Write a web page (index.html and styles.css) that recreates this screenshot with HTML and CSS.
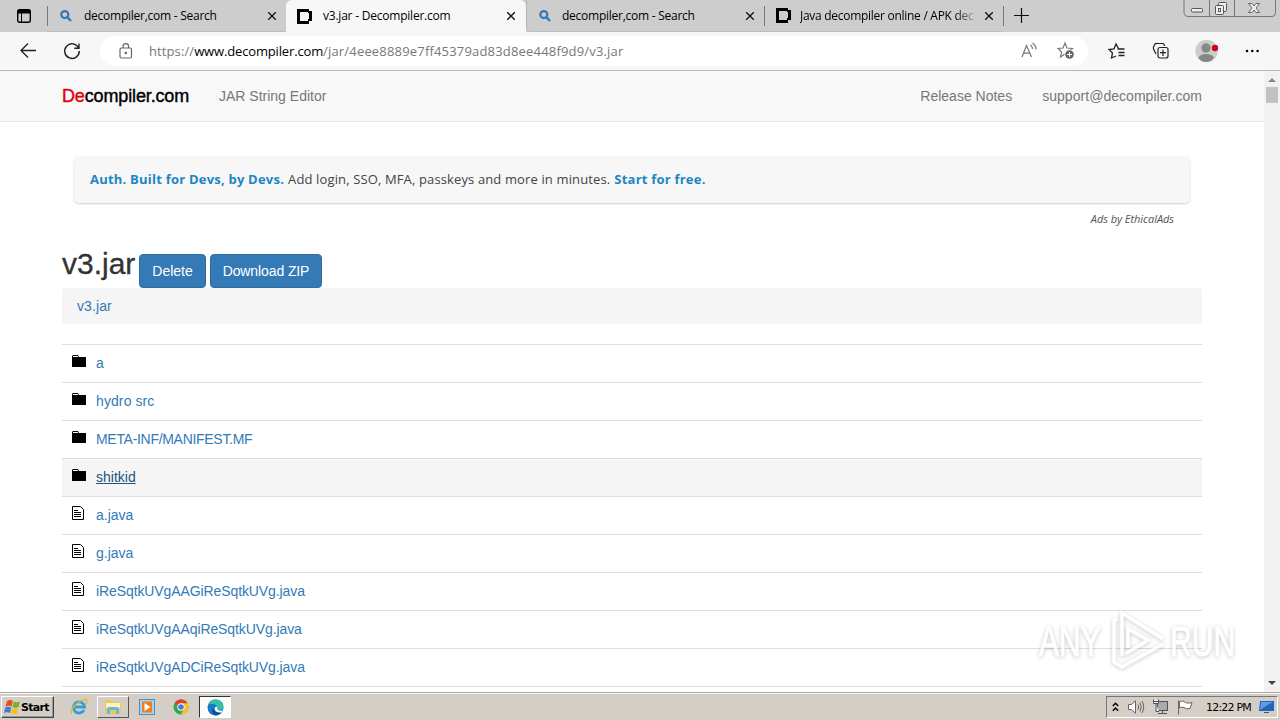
FILE: index.html
```html
<!DOCTYPE html>
<html lang="en">
<head>
<meta charset="utf-8">
<title>v3.jar - Decompiler.com</title>
<link rel="stylesheet" href="styles.css">
</head>
<body>
<svg width="0" height="0" class="defs">
  <symbol id="search" viewBox="0 0 12 12"><circle cx="4.800" cy="4.600" r="3.500" fill="none" stroke="#3478b8" stroke-width="2.200"/><path d="M7.300 7.200L11 11" stroke="#3478b8" stroke-width="2.400"/></symbol>
  <symbol id="dsite" viewBox="0 0 15 15"><path d="M0 0H12V2H15V12H12V15H0ZM3 3V12H11V10H12V4H11V3Z" fill="#000" fill-rule="evenodd"/></symbol>
  <symbol id="close" viewBox="0 0 8 8"><path d="M0 0L8 8M8 0L0 8" stroke="#111" stroke-width="1.300"/></symbol>
  <symbol id="folder" viewBox="0 0 14 12"><path d="M0 1L1 0H6L7 2H14V12H0Z"/><path d="M1 1.500H6" stroke="#fff" stroke-width="1"/></symbol>
  <symbol id="file" viewBox="0 0 12 14"><path d="M.5 .5H8.500L11.500 3.500V13.500H.5Z" fill="#fff" stroke="#000"/><path d="M2 4.500H6M2 6.500H9M2 8.500H9M2 10.500H9" stroke="#000"/></symbol>
</svg>

<header class="tabs">
  <div class="workspace"><svg width="14" height="14" viewBox="0 0 14 14"><rect x=".7" y=".7" width="12.600" height="12.600" rx="2" fill="none" stroke="#000" stroke-width="1.400"/><path d="M1 1H13V4H1ZM4.500 4V13" stroke="#000" stroke-width="1"/></svg></div>
  <div class="tab sep"><svg class="fav s"><use href="#search"/></svg><span class="title t1">decompiler,com - Search</span><svg class="x"><use href="#close"/></svg></div>
  <div class="tab active"><svg class="fav"><use href="#dsite"/></svg><span class="title t2">v3.jar - Decompiler.com</span><svg class="x"><use href="#close"/></svg></div>
  <div class="tab third"><svg class="fav s"><use href="#search"/></svg><span class="title t1">decompiler,com - Search</span><svg class="x"><use href="#close"/></svg></div>
  <div class="tab sep"><svg class="fav"><use href="#dsite"/></svg><span class="title t3">Java decompiler online / APK dec</span><svg class="x"><use href="#close"/></svg></div>
  <div class="newtab sep"><svg width="15" height="15"><path d="M7.500 0V15M0 7.500H15" stroke="#111" stroke-width="1.200"/></svg></div>
  <div class="winbtns">
    <svg width="94" height="18"><path d="M1 0V13Q1.500 16.500 5 16.500H89Q92.500 16.500 92.500 13V0M26.500 0V16M51.500 0V16" fill="none" stroke="#777"/><rect x="8.500" y="8.500" width="11" height="3.500" rx="1" fill="#eee" stroke="#555"/><rect x="35.500" y="2.500" width="8" height="9" rx="1" fill="#eee" stroke="#555"/><rect x="32.500" y="5.500" width="8" height="9" rx="1" fill="#eee" stroke="#555"/><rect x="35.500" y="8.500" width="2" height="3" fill="#fff" stroke="#555"/><path d="M65.500 3.500H69L71 6L73 3.500H76.500L73 8L76.500 12.500H73L71 10L69 12.500H65.500L69 8Z" fill="#eee" stroke="#666"/></svg>
  </div>
</header>

<nav class="toolbar">
  <svg width="17" height="16" fill="none" stroke="#222" stroke-width="1.300"><path d="M16 7.500H1M8 .5L1 7.500L8 14.500"/></svg>
  <svg class="reload" width="18" height="18" fill="none" stroke="#222" stroke-width="1.400"><path d="M15.600 6A7.300 7.300 0 1 0 16.300 9M16 1.500V6.200H11.300"/></svg>
  <div class="address">
    <svg width="14" height="16" fill="none" stroke="#666" stroke-width="1.200"><rect x="1" y="5" width="11.500" height="10" rx="1.500"/><path d="M4 5V3.500A2.800 2.800 0 0 1 9.600 3.500V5"/><circle cx="6.800" cy="10" r=".7" fill="#555"/></svg>
    <div class="url"><span class="u1">https://</span><span class="u2">www.decompiler.com</span><span class="u3">/jar/4eee8889e7ff45379ad83d8ee448f9d9/v3.jar</span></div>
    <svg width="17" height="16" fill="none" stroke="#777" stroke-width="1.200"><path d="M1 14L5.500 2.500L10.500 14M2.500 10.200H9M9.500 2Q11.500 3.500 11.500 6M11.500 0Q15 2.500 15 6.500"/></svg>
    <svg class="addfav" width="19" height="18"><path d="M8 1L10 6L15.500 6.500L11.500 10L12 13L8 12L3.500 15L4.500 10L1 6.500L6 6Z" fill="none" stroke="#777" stroke-width="1.200"/><circle cx="12.500" cy="12.500" r="5" fill="#fff"/><circle cx="12.500" cy="12.500" r="4.300" fill="#666"/><path d="M12.500 10V15M10 12.500H15" stroke="#fff"/></svg>
  </div>
  <svg class="favs" width="18" height="17" fill="none" stroke="#222" stroke-width="1.300"><path d="M10.500 5.500L8 1L6 6L1 6.500L4.500 10L3.500 15L8 13M9.500 6H16.500M10.500 9.500H16.500M10.500 12.500H16.500"/></svg>
  <svg class="coll" width="18" height="18" fill="none" stroke="#222" stroke-width="1.200"><path d="M4 12L1.500 7Q1 5 2 4L3 2Q4 1 6 1.500H11Q12.500 2 12.500 4"/><rect x="6" y="5.500" width="10" height="10.500" rx="2"/><path d="M11 7.500V14M8 10.700H14"/></svg>
  <svg class="profile" width="24" height="24"><circle cx="11.500" cy="12" r="11.200" fill="#c9ceca"/><circle cx="11" cy="9" r="4.700" fill="#898989"/><path d="M3.500 19Q5 15 11 15Q17 15 19 18.500Q16 23 11 23Q6 23 3.500 19Z" fill="#858585"/><circle cx="20" cy="9" r="3.200" fill="#d9001b"/></svg>
  <svg class="more" width="15" height="4"><circle cx="2" cy="2" r="1.300"/><circle cx="7.300" cy="2" r="1.300"/><circle cx="12.600" cy="2" r="1.300"/></svg>
</nav>

<div class="view">
  <main class="page">
    <div class="navbar">
      <span class="brand"><b>De</b>compiler.com</span>
      <span class="n1">JAR String Editor</span>
      <span class="n2">Release Notes</span>
      <span class="n3">support@decompiler.com</span>
    </div>
    <div class="content">
      <div class="ad"><b class="a1">Auth. Built for Devs, by Devs.</b><span class="a2">Add login, SSO, MFA, passkeys and more in minutes.</span><b class="a3">Start for free.</b></div>
      <div class="adby"><span>Ads by EthicalAds</span></div>
      <div class="head"><h1>v3.jar</h1><span class="btn del"><span>Delete</span></span><span class="btn zip"><span>Download ZIP</span></span></div>
      <div class="crumb"><span>v3.jar</span></div>
      <div class="list">
        <div class="row"><svg class="d"><use href="#folder"/></svg><a>a</a></div>
        <div class="row"><svg class="d"><use href="#folder"/></svg><a class="hy">hydro src</a></div>
        <div class="row"><svg class="d"><use href="#folder"/></svg><a class="meta">META-INF/MANIFEST.MF</a></div>
        <div class="row hover"><svg class="d"><use href="#folder"/></svg><a>shitkid</a></div>
        <div class="row"><svg class="f"><use href="#file"/></svg><a>a.java</a></div>
        <div class="row"><svg class="f"><use href="#file"/></svg><a>g.java</a></div>
        <div class="row"><svg class="f"><use href="#file"/></svg><a class="long">iReSqtkUVgAAGiReSqtkUVg.java</a></div>
        <div class="row"><svg class="f"><use href="#file"/></svg><a class="long">iReSqtkUVgAAqiReSqtkUVg.java</a></div>
        <div class="row"><svg class="f"><use href="#file"/></svg><a class="long">iReSqtkUVgADCiReSqtkUVg.java</a></div>
        <div class="row"></div>
      </div>
    </div>
  </main>
  <div class="scroll"><i class="up"></i><i class="thumb"></i><i class="down"></i></div>
  <div class="mark">
    <span>ANY</span>
    <svg width="62" height="64" fill="none" stroke="#fff" stroke-width="3.500"><path d="M14 47V4L55 30M9 10L6 12V53L14 58L55 35M20 39V20L40 31L17 45"/></svg>
    <span>RUN</span>
  </div>
</div>

<footer class="taskbar">
  <div class="start"><svg width="17" height="16"><path d="M3 2Q6 0 9 2L7.500 7.500Q4.500 6 1.500 7.500Z" fill="#e8501f"/><path d="M10 2.500Q13 4 16 2.500L14.500 8Q11.500 9.500 8.500 8Z" fill="#6fb233"/><path d="M1.200 8.500Q4 7 7.200 8.500L6 14Q3 12.500 0 14Z" fill="#3a83d0"/><path d="M8.200 9Q11 10.500 14.200 9L13 14.500Q10 16 7 14.500Z" fill="#f8bd22"/></svg><span>Start</span></div>
  <div class="task ie"><svg width="18" height="18"><path d="M14 12A5.600 5.600 0 1 1 14.600 9H5" fill="none" stroke="#2ba0dd" stroke-width="2.800"/><path d="M2 16Q-1 14 5 7Q13 0 16.500 2Q18 4 15 7" fill="none" stroke="#e5b52c" stroke-width="1.300"/></svg></div>
  <div class="task raised"><svg width="18" height="18"><path d="M1 2H7L8 4H17V16H1Z" fill="#e9c95a"/><path d="M2 5H16V10H2Z" fill="#fff3b8"/><path d="M3 16V11Q3 9 5 9H13Q15 9 15 11V16H12V12H6V16Z" fill="#68b8e2"/></svg></div>
  <div class="task"><svg width="16" height="16"><rect x=".5" y=".5" width="15" height="15" fill="#a9d1f0" stroke="#4c8fc7"/><rect x="3" y="2.500" width="10" height="11" fill="#ef7f1a"/><path d="M5.500 4L11.500 8L5.500 12Z" fill="#fff"/></svg></div>
  <div class="task"><svg width="16" height="16"><circle cx="8" cy="8" r="7.500" fill="#2fa84f"/><path d="M8 8L1.500 4.300A7.500 7.500 0 0 1 14.500 4.300Z" fill="#e33b2e"/><path d="M8 8V4.300H14.500A7.500 7.500 0 0 1 7.500 15.500L11 10Z" fill="#fbc116"/><circle cx="8" cy="8" r="3.700" fill="#fff"/><circle cx="8" cy="8" r="2.800" fill="#3b7de0"/></svg></div>
  <div class="task pressed"><svg width="17" height="17"><circle cx="8.500" cy="8.500" r="8" fill="#1777c8"/><path d="M1 6Q3 .5 9 .5Q16 1 16.500 7Q16.500 11 12 11Q9 11 10 8.500Q10 5.500 6.500 5Q3 4.500 1 6Z" fill="#36bfa5"/><path d="M6.500 9Q7 14 14.500 13.500Q11 17 7.500 16Q3 13 6.500 9Z" fill="#0c4f99"/><path d="M10.500 8Q9 10 12 11.500Q14 12 16 11L14.500 13.500Q8 14 7.500 9.500Q8 7 10.500 8Z" fill="#fff"/></svg></div>
  <div class="tray">
    <svg class="chev" width="7" height="10" fill="none" stroke="#000" stroke-width="1.500"><path d="M.8 4L3.500 1.300L6.200 4M.8 8.700L3.500 6L6.200 8.700"/></svg>
    <svg class="vol" width="17" height="14" fill="none" stroke="#666"><path d="M.5 4.500H3.500L7.500 .8V13.200L3.500 9.500H.5Z" fill="#fff"/><path d="M10 4.500Q11.500 7 10 9.500M12 2.500Q14.500 7 12 11.500M14 1Q17.500 7 14 13"/></svg>
    <svg class="net" width="17" height="16"><rect x="4.500" y="2.500" width="10" height="9" fill="#aaa" stroke="#555"/><path d="M5 14.500H14M9.500 12V14" stroke="#555"/><path d="M.5 .5V4.500H5.500V.5M.5 2.500H5.500M3 4.500V12.500H6" fill="#eee" stroke="#555"/></svg>
    <svg class="flag" width="16" height="15"><path d="M1.500 .5V14.500M2.500 1.500Q6 0 8.500 2.500Q11 4 15 2.500L13 8.500Q9.500 9.500 7 7.500Q5 6.500 2.500 8Z" fill="#fff" stroke="#666"/></svg>
    <span class="clock">12:22 PM</span>
    <svg class="desk" width="16" height="13"><path d="M1 0H15V10H0Z" fill="#2464bd"/><path d="M2 1H14L7 5L1 9Z" fill="#5b9be8"/><path d="M5 11H10V12H5Z" fill="#456"/></svg>
  </div>
</footer>
</body>
</html>
```
FILE: styles.css
```css
* { box-sizing: border-box; }
body { margin: 0; width: 1280px; height: 720px; overflow: hidden; display: flex; flex-direction: column; background: #fff; font-family: "Liberation Sans", Arial, sans-serif; font-size: 14px; }
svg { display: block; flex: none; overflow: visible; }
span, a, b, h1 { white-space: nowrap; }
.defs { position: absolute; }

.tabs { height: 32px; flex: none; display: flex; background: #cdcdcd; color: #000; font: 12px "Open Sans", sans-serif; }
.workspace { width: 47px; padding: 9px 0 0 17px; }
.tab { width: 239px; height: 32px; display: flex; align-items: center; padding: 0 10px 0 12px; border-bottom: 1px solid #bdbdbd; position: relative; }
.tab.active { width: 240px; background: #f7f7f7; border-radius: 6px 6px 0 0; border-bottom: 0; padding: 0 11px; }
.tab.third { width: 238px; border-left: 1px solid #b5b5b5; border-radius: 0 0 0 5px; }
.tab.third .fav { margin-left: 0; margin-right: 11px; }
.sep::before { content: ""; position: absolute; left: 0; top: 6px; width: 1px; height: 20px; background: #777; }
.fav { width: 15px; height: 15px; margin-right: 11px; }
.fav.s { width: 12px; height: 12px; margin: 0 12px 0 1px; }
.title { flex: 1; line-height: 20px; }
.x { width: 8px; height: 8px; margin: 0 0 0 8px; }
.t1 { letter-spacing: -.25px; }
.t2 { letter-spacing: -.22px; }
.t3 { letter-spacing: -.28px; margin-left: -2px; -webkit-mask-image: linear-gradient(90deg, #000 155px, transparent 178px); mask-image: linear-gradient(90deg, #000 155px, transparent 178px); }
.newtab { width: 180px; padding: 8px 0 0 11px; position: relative; }
.winbtns { width: 96px; }

.toolbar { height: 39px; flex: none; display: flex; align-items: center; background: #f7f7f7; border-bottom: 1px solid #b8b8b8; padding-left: 20px; }
.reload { margin-left: 26px; }
.address { width: 988px; height: 30px; margin-left: 19px; border-radius: 15px; background: #fff; display: flex; align-items: center; padding-left: 19px; }
.url { width: 888px; flex: none; padding-left: 16px; font: 13px "Open Sans", sans-serif; color: #777; display: flex; }
.u1 { letter-spacing: .1px; }
.u2 { color: #000; letter-spacing: -.15px; }
.u3 { letter-spacing: .18px; }
.addfav { margin-left: 19px; }
.favs { margin-left: 20px; }
.coll { margin-left: 26px; }
.profile { margin-left: 25px; }
.more { margin-left: 26px; }

.view { height: 621px; flex: none; display: flex; position: relative; overflow: hidden; }
.page { width: 1264px; }
.navbar { height: 51px; background: #f8f8f8; border-bottom: 1px solid #e7e7e7; display: flex; align-items: center; padding: 0 62px; color: #777; }
.brand { width: 157px; font-size: 18px; letter-spacing: -.14px; color: #000; -webkit-text-stroke: .4px; }
.brand b { font-weight: 400; color: #e00010; }
.n2 { margin-left: auto; margin-right: 30px; }
.n3 { letter-spacing: .04px; }
.content { padding: 34px 62px 0; }
.ad { height: 47px; margin: 0 12px; padding: 0 16px 1px; border-radius: 5px; background: #f7f7f7; box-shadow: 0 1px 2px rgba(0,0,0,.2); display: flex; align-items: center; gap: 4px; font: 13px "Open Sans", sans-serif; color: #444; }
.ad b { color: #1c86c3; }
.a1 { letter-spacing: .22px; }
.a2 { letter-spacing: .13px; }
.a3 { letter-spacing: .22px; }
.adby { display: flex; justify-content: flex-end; padding: 8px 28px 0 0; font: italic 11px/16px "Open Sans", sans-serif; letter-spacing: -.05px; color: #555; height: 51px; }
.head { height: 34px; display: flex; }
h1 { margin: -7px 0 0; width: 77px; font-size: 30px; line-height: 33px; font-weight: 400; color: #333; -webkit-text-stroke: .3px; }
.btn { height: 34px; border: 1px solid #2e6da4; background: #337ab7; color: #fff; border-radius: 4px; display: flex; align-items: center; justify-content: center; }
.del { width: 67px; margin-right: 4px; }
.zip { width: 112px; letter-spacing: -.1px; }
.crumb { height: 36px; background: #f5f5f5; border-radius: 4px; padding: 8px 15px; line-height: 20px; color: #337ab7; letter-spacing: .1px; margin-bottom: 20px; }
.row { height: 38px; border-top: 1px solid #ddd; display: flex; padding: 8px 10px; color: #337ab7; line-height: 20px; }
.row.hover { background: #f5f5f5; }
.hover a { color: #23527c; text-decoration: underline; }
.hy { letter-spacing: .1px; }
.meta { letter-spacing: -.3px; }
.long { letter-spacing: -.1px; }
.d { width: 14px; height: 12px; margin: 2px 10px 0 0; }
.f { width: 12px; height: 14px; margin: 1px 12px 0 0; }

.scroll { width: 16px; background: #f1f1f1; display: flex; flex-direction: column; align-items: center; padding: 7px 0; }
.scroll i { display: block; }
.up { border: 4px solid transparent; border-top: 0; border-bottom: 4px solid #888; }
.thumb { width: 12px; height: 16px; margin-top: 5px; background: #c1c1c1; }
.down { border: 4px solid transparent; border-bottom: 0; border-top: 4px solid #444; margin-top: auto; }
.mark { position: absolute; left: 1039px; top: 538px; height: 64px; display: flex; align-items: center; color: #fff; opacity: .8; font: 43px/64px "Liberation Sans", sans-serif; filter: drop-shadow(0 1px 2px rgba(0,0,0,.28)); }
.mark span { transform: scaleX(.7); transform-origin: 0 50%; width: 69px; -webkit-text-stroke: 1px #fff; }

.taskbar { height: 28px; flex: none; background: #d5cec6; border-top: 1px solid #aaa; box-shadow: inset 0 1px #f6f4f0; display: flex; align-items: center; padding: 1px 2px 0 1px; }
.start { width: 53px; height: 22px; border: 1px solid; border-color: #fff #444 #444 #fff; box-shadow: inset -1px -1px #999; display: flex; align-items: center; padding-left: 2px; font: bold 11px "DejaVu Sans", sans-serif; margin-right: 8px; }
.start span { letter-spacing: -.7px; }
.task { width: 34px; height: 22px; display: flex; align-items: center; justify-content: center; }
.raised { width: 32px; border: 1px solid; border-color: #fff #555 #555 #fff; margin: 0 1px; }
.pressed { width: 32px; border: 1px solid; border-color: #333 #fff #fff #333; background: #fcfcfb; margin-left: 1px; }
.tray { width: 172px; height: 22px; margin-left: auto; border: 1px solid; border-color: #777 #fff #fff #777; display: flex; align-items: center; font: 11px "DejaVu Sans", sans-serif; padding-left: 5px; }
.vol { margin-left: 9px; }
.net { margin-left: 8px; }
.flag { margin-left: 7px; }
.clock { margin-left: 13px; width: 53px; letter-spacing: -.8px; }
```
